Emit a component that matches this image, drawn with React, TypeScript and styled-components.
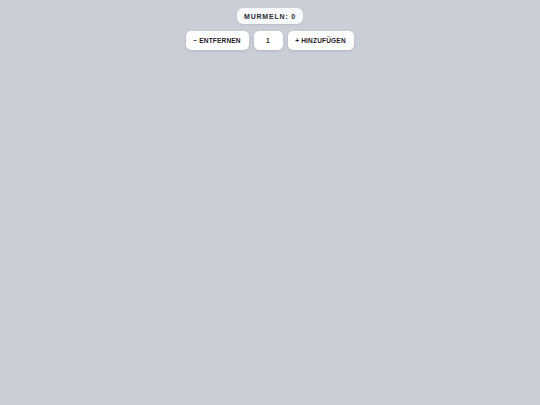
import React, { useState } from "react"
import styled, { createGlobalStyle } from "styled-components"

const GlobalStyle = createGlobalStyle`
  html, body {
    margin: 0;
    padding: 0;
    background: #cacfd7;
    font-family: "Liberation Sans", Arial, sans-serif;
  }
`

const Page = styled.div`
  display: flex;
  flex-direction: column;
  align-items: center;
  gap: 7px;
  padding-top: 8px;
  min-height: 405px;
  box-sizing: border-box;
`

const Counter = styled.div`
  display: flex;
  align-items: center;
  justify-content: center;
  width: 66px;
  height: 16px;
  box-sizing: border-box;
  background: #f7f8fa;
  border-radius: 6px;
  color: #2a2d33;
  font-size: 7px;
  font-weight: 700;
  letter-spacing: 0.8px;
  box-shadow: 0 1px 2px rgba(0, 0, 0, 0.08);
`

const Controls = styled.div`
  display: flex;
  gap: 5px;
  margin-left: -1px;
`

const Button = styled.button<{ $width: number }>`
  display: flex;
  align-items: center;
  justify-content: center;
  width: ${(p) => p.$width}px;
  height: 19px;
  padding: 0;
  border: none;
  border-radius: 5px;
  background: #ffffff;
  color: #1f2226;
  font-family: "Liberation Sans", Arial, sans-serif;
  font-size: 6.5px;
  font-weight: 700;
  letter-spacing: 0.2px;
  box-shadow: 0 1px 3px rgba(0, 0, 0, 0.12);
  cursor: pointer;
`

export default function App() {
  const [marbles, setMarbles] = useState(0)
  const step = 1

  return (
    <>
      <GlobalStyle />
      <Page>
        <Counter>MURMELN: {marbles}</Counter>
        <Controls>
          <Button $width={63} onClick={() => setMarbles((m) => Math.max(0, m - step))}>
            − ENTFERNEN
          </Button>
          <Button $width={29}>{step}</Button>
          <Button $width={66} onClick={() => setMarbles((m) => m + step)}>
            + HINZUFÜGEN
          </Button>
        </Controls>
      </Page>
    </>
  )
}
